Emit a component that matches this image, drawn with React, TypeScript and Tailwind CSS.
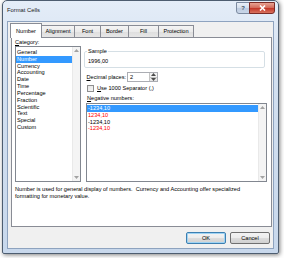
const categories = [
  'General',
  'Number',
  'Currency',
  'Accounting',
  'Date',
  'Time',
  'Percentage',
  'Fraction',
  'Scientific',
  'Text',
  'Special',
  'Custom',
];

const negatives = [
  { text: '-1234,10', red: false },
  { text: '1234,10', red: true },
  { text: '-1234,10', red: false },
  { text: '-1234,10', red: true },
];

const tabs = [
  { label: 'Alignment', w: 'w-[34px]' },
  { label: 'Font', w: 'w-[27px]' },
  { label: 'Border', w: 'w-[29px]' },
  { label: 'Fill', w: 'w-[31px]' },
  { label: 'Protection', w: 'w-[36px]' },
];

const description =
  'Number is used for general display of numbers.\u00a0 Currency and Accounting offer specialized formatting for monetary value.';

const Arrow = ({ up, color = '#a3a3a3' }: { up?: boolean; color?: string }) => (
  <svg width="5" height="3" viewBox="0 0 5 3">
    <path d={up ? 'M0 3 L2.5 0 L5 3 Z' : 'M0 0 L2.5 3 L5 0 Z'} fill={color} />
  </svg>
);

const ScrollBar = () => (
  <div className="flex w-[8px] flex-col justify-between border-l border-[#e9e9e9] bg-[#f4f4f4]">
    <div className="flex h-[7px] items-center justify-center">
      <Arrow up />
    </div>
    <div className="flex h-[7px] items-center justify-center">
      <Arrow />
    </div>
  </div>
);

const TitleBar = () => (
  <div className="flex h-[20px] items-start">
    <span className="ml-[4px] mt-[6px] whitespace-nowrap text-[5.8px] leading-[7px] text-[#1a1a1a]">Format Cells</span>
    <div className="ml-auto mr-[3px] mt-[1px] flex">
      <div className="flex h-[12px] w-[14px] items-center justify-center rounded-bl-[3px] border border-[#7b8aa0] bg-[linear-gradient(180deg,#e9eff7_0%,#d3deec_50%,#bccbe0_51%,#c9d6e8_100%)] text-[6px] font-bold leading-none text-[#3b4a60]">
        ?
      </div>
      <div className="-ml-px flex h-[12px] w-[26px] items-center justify-center rounded-br-[3px] border border-[#7a2b26] bg-[linear-gradient(180deg,#e8a393_0%,#d46d5d_45%,#c4392a_55%,#d9735f_100%)]">
        <svg width="7" height="6" viewBox="0 0 7 6">
          <path d="M1 0.5 L6 5.5 M6 0.5 L1 5.5" stroke="#ffffff" strokeWidth="1.6" />
        </svg>
      </div>
    </div>
  </div>
);

const Tabs = () => (
  <div className="flex h-[15px] items-end pl-[2px]">
    <div className="relative z-10 -mb-px flex h-[15px] w-[32px] items-center justify-center border-x border-t border-[#898c95] bg-white">
      Number
    </div>
    {tabs.map((t) => (
      <div
        key={t.label}
        className={`-ml-px flex h-[12px] ${t.w} items-center justify-center border-x border-t border-[#898c95] bg-[linear-gradient(180deg,#f4f4f4_0%,#ebebeb_50%,#dedede_51%,#e6e6e6_100%)]`}
      >
        {t.label}
      </div>
    ))}
  </div>
);

const CategoryColumn = () => (
  <div className="flex flex-col pl-[3px] pt-[1px]">
    <div className="leading-[7px]">
      <span className="underline">C</span>ategory:
    </div>
    <div className="flex h-[136px] w-[66px] border border-[#828790] bg-white">
      <div className="flex flex-1 flex-col pt-[2px]">
        {categories.map((c) => (
          <div
            key={c}
            className={`h-[6.84px] pl-[1px] leading-[6.84px] ${c === 'Number' ? 'bg-[#3399ff] text-white' : ''}`}
          >
            {c}
          </div>
        ))}
      </div>
      <ScrollBar />
    </div>
  </div>
);

const OptionsColumn = () => (
  <div className="ml-[3px] flex flex-col">
    <fieldset className="mt-[9.5px] h-[20px] w-[181px] rounded-[2px] border border-[#d5dfe5] pl-[3px]">
      <legend className="-ml-px px-[1px] leading-[7px]">Sample</legend>
      <div className="pt-[3px] leading-[7px]">1996,00</div>
    </fieldset>
    <div className="mt-[4.5px] flex h-[10px] items-center">
      <div className="w-[43px] whitespace-nowrap pl-[2.5px]">
        <span className="underline">D</span>ecimal places:
      </div>
      <div className="flex h-[10px] w-[31px] border border-[#abadb3] bg-white">
        <div className="flex flex-1 items-center pl-[2px]">2</div>
        <div className="flex w-[8px] flex-col border-l border-[#c3c3c3]">
          <div className="flex flex-1 items-center justify-center border-b border-[#c3c3c3] bg-[#f2f2f2]">
            <Arrow up color="#4d4d4d" />
          </div>
          <div className="flex flex-1 items-center justify-center bg-[#e8e8e8]">
            <Arrow color="#4d4d4d" />
          </div>
        </div>
      </div>
    </div>
    <div className="mt-[3px] flex h-[7px] items-center pl-[3px]">
      <div className="h-[7px] w-[7px] border border-[#8f8f8f] bg-[linear-gradient(135deg,#e4e4e4_0%,#f8f8f8_100%)]" />
      <span className="ml-[3px] whitespace-nowrap">
        <span className="underline">U</span>se 1000 Separator (,)
      </span>
    </div>
    <div className="mt-[2.5px] whitespace-nowrap pl-[3px] leading-[7px]">
      <span className="underline">N</span>egative numbers:
    </div>
    <div className="ml-[2px] mt-[1.5px] flex h-[79px] w-[181px] border border-[#828790] bg-white">
      <div className="flex flex-1 flex-col pt-[1px]">
        {negatives.map((n, i) => (
          <div
            key={i}
            className={`h-[6.8px] pl-[1px] leading-[6.8px] ${
              i === 0 ? 'bg-[#3399ff] text-white' : n.red ? 'text-[#ff0000]' : ''
            }`}
          >
            {n.text}
          </div>
        ))}
      </div>
      <ScrollBar />
    </div>
  </div>
);

const Panel = () => (
  <div className="ml-[3px] flex h-[190px] w-[261px] flex-col border border-[#898c95] bg-white">
    <div className="flex">
      <CategoryColumn />
      <OptionsColumn />
    </div>
    <p className="mt-[4px] w-[250px] pl-[3px] leading-[7px]">{description}</p>
  </div>
);

const DialogButton = ({ label, primary }: { label: string; primary?: boolean }) => (
  <div
    className={`flex h-[12px] w-[40px] items-center justify-center rounded-[2px] border bg-[linear-gradient(180deg,#f3f3f3_0%,#ececec_50%,#dddddd_51%,#d0d0d0_100%)] ${
      primary ? 'border-[#3c7fb1] shadow-[inset_0_0_0_1px_#9fd3f3]' : 'border-[#707070]'
    }`}
  >
    {label}
  </div>
);

export default function App() {
  return (
    <div className="h-[258px] w-[284px] overflow-hidden bg-white pl-[2px] font-['Liberation_Sans',Arial,sans-serif] text-[5.6px] leading-[6.8px] text-black">
      <div className="flex h-[254px] w-[277px] flex-col rounded-b-[2px] rounded-t-[5px] border border-[#4d5d70] bg-[linear-gradient(180deg,#e4edf8_0%,#d3e0f0_30%,#c8d8ec_100%)] shadow-[1px_1px_4px_rgba(0,0,0,0.5)]">
        <TitleBar />
        <div className="mx-[4px] mb-[4px] flex flex-1 flex-col border border-[#8ea3bf] bg-[#f0f0f0]">
          <Tabs />
          <Panel />
          <div className="mt-[5px] flex justify-end gap-[4px] pr-[3px]">
            <DialogButton label="OK" primary />
            <DialogButton label="Cancel" />
          </div>
        </div>
      </div>
    </div>
  );
}
